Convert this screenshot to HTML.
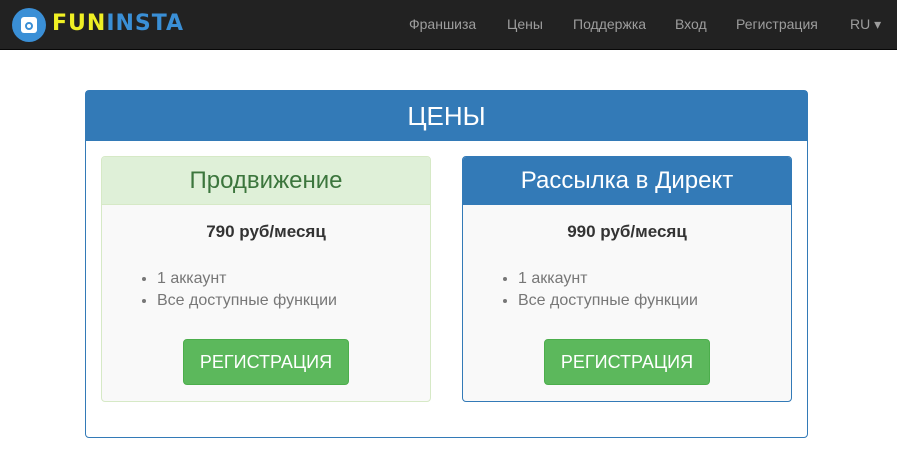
<!DOCTYPE html>
<html><head><meta charset="utf-8"><style>
*{box-sizing:border-box}
body{margin:0;width:897px;height:468px;background:#fff;font-family:"Liberation Sans",sans-serif;position:relative;overflow:hidden}
.nav{position:absolute;left:0;top:0;width:897px;height:50px;background:#222;border-bottom:1px solid #080808}
.nav a{position:absolute;top:16px;color:#9d9d9d;font-size:14px}
.logo{position:absolute;left:12px;top:8px;width:34px;height:34px;border-radius:50%;background:#3a8fd6}
.logo i{position:absolute;left:9px;top:9px;width:16px;height:16px;background:#fff;border-radius:3px}
.logo i:after{content:"";position:absolute;left:4px;top:5px;width:8px;height:8px;border-radius:50%;border:2px solid #3a8fd6;box-sizing:border-box}
.lt{position:absolute;left:52px;top:11px;font-size:22px;font-weight:bold;letter-spacing:1px;font-family:"DejaVu Sans",sans-serif}
.outer{position:absolute;left:85px;top:90px;width:723px;height:348px;border:1px solid #337ab7;border-radius:4px}
.oh{height:50px;background:#337ab7;color:#fff;font-size:26px;text-align:center;line-height:50px}
.card{position:absolute;top:65px;width:330px;height:246px;border-radius:4px;background:#f9f9f9}
.ch{height:48px;text-align:center;line-height:48px;font-size:24px;border-radius:3px 3px 0 0}
.price{text-align:center;font-weight:bold;font-size:17px;color:#333;margin-top:17px}
ul{margin:26px 0 0 55px;padding:0 0 0 0;font-size:16px;color:#777;line-height:22px;list-style:disc}
.btn{position:absolute;left:81px;top:182px;width:166px;height:46px;background:#5cb85c;border:1px solid #4cae4c;border-radius:4px;color:#fff;font-size:18px;text-align:center;line-height:44px}
</style></head><body>
<div class="nav">
<div class="logo"><i></i></div>
<div class="lt"><span style="color:#f0f024">FUN</span><span style="color:#3a8fd6">INSTA</span></div>
<a style="left:409px">Франшиза</a><a style="left:507px">Цены</a><a style="left:573px">Поддержка</a><a style="left:675px">Вход</a><a style="left:736px">Регистрация</a><a style="left:850px">RU ▾</a>
</div>
<div class="outer">
<div class="oh">ЦЕНЫ</div>
<div class="card" style="left:15px;border:1px solid #d6e9c6">
<div class="ch" style="background:#dff0d8;color:#3c763d;border-bottom:1px solid #d6e9c6">Продвижение</div>
<div class="price">790 руб/месяц</div>
<ul><li>1 аккаунт</li><li>Все доступные функции</li></ul>
<div class="btn">РЕГИСТРАЦИЯ</div></div>
<div class="card" style="left:376px;border:1px solid #337ab7">
<div class="ch" style="background:#337ab7;color:#fff">Рассылка в Директ</div>
<div class="price">990 руб/месяц</div>
<ul><li>1 аккаунт</li><li>Все доступные функции</li></ul>
<div class="btn">РЕГИСТРАЦИЯ</div></div>
</div>
</body></html>
